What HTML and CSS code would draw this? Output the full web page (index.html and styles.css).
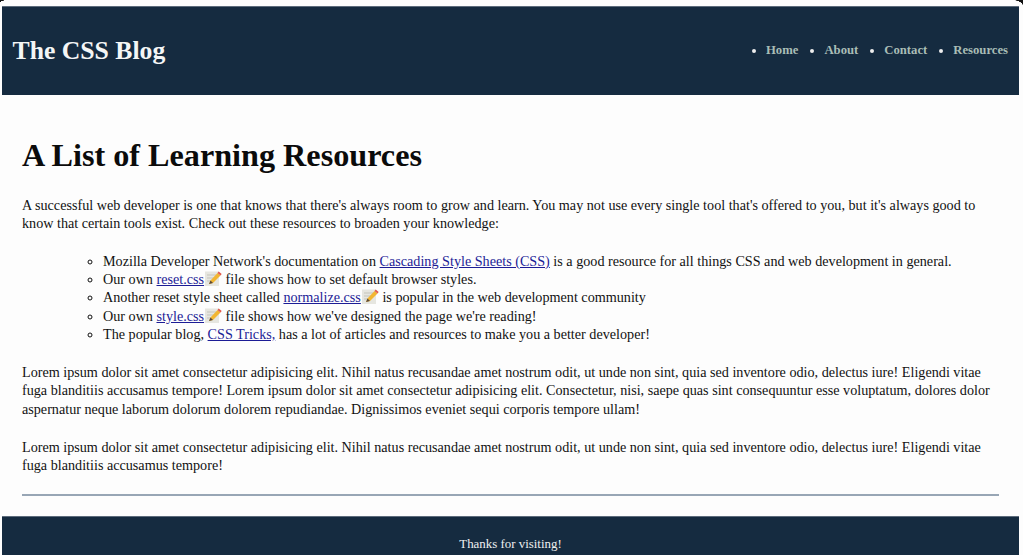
FILE: index.html
```html
<!DOCTYPE html>
<html>
<head>
    <meta charset="UTF-8">
    <title>The CSS Blog</title>
    <link rel="stylesheet" href="styles.css">
</head>
<body>
<span class="corner corner-left"></span>
<span class="corner corner-right"></span>
<header class="top">
    <h2 class="logo">The CSS Blog</h2>
    <ul class="nav">
        <li><a href="#">Home</a></li>
        <li><a href="#">About</a></li>
        <li><a href="#">Contact</a></li>
        <li><a href="#">Resources</a></li>
    </ul>
</header>
<main class="content">
    <h1>A List of Learning Resources</h1>
    <p>A successful web developer is one that knows that there's always room to grow and learn. You may not use every single tool that's offered to you, but it's always good to know that certain tools exist. Check out these resources to broaden your knowledge:</p>
    <ul class="links">
        <li>Mozilla Developer Network's documentation on <a href="#">Cascading Style Sheets (CSS)</a> is a good resource for all things CSS and web development in general.</li>
        <li>Our own <a href="#">reset.css<svg class="memo" viewBox="0 0 18 16"><use href="#memo"/></svg></a> file shows how to set default browser styles.</li>
        <li>Another reset style sheet called <a href="#">normalize.css<svg class="memo" viewBox="0 0 18 16"><use href="#memo"/></svg></a> is popular in the web development community</li>
        <li>Our own <a href="#">style.css<svg class="memo" viewBox="0 0 18 16"><use href="#memo"/></svg></a> file shows how we've designed the page we're reading!</li>
        <li>The popular blog, <a href="#">CSS Tricks,</a> has a lot of articles and resources to make you a better developer!</li>
    </ul>
    <p>Lorem ipsum dolor sit amet consectetur adipisicing elit. Nihil natus recusandae amet nostrum odit, ut unde non sint, quia sed inventore odio, delectus iure! Eligendi vitae fuga blanditiis accusamus tempore! Lorem ipsum dolor sit amet consectetur adipisicing elit. Consectetur, nisi, saepe quas sint consequuntur esse voluptatum, dolores dolor aspernatur neque laborum dolorum dolorem repudiandae. Dignissimos eveniet sequi corporis tempore ullam!</p>
    <p>Lorem ipsum dolor sit amet consectetur adipisicing elit. Nihil natus recusandae amet nostrum odit, ut unde non sint, quia sed inventore odio, delectus iure! Eligendi vitae fuga blanditiis accusamus tempore!</p>
    <hr class="rule">
</main>
<footer class="bottom">Thanks for visiting!</footer>
<svg class="defs" width="0" height="0">
    <symbol id="memo" viewBox="0 0 18 16">
        <rect x="1" y="0.5" width="14" height="14.5" fill="#e6e6e0"/>
        <path d="M3 4h9M3 7h7M3 10h4" stroke="#c4c4bb" stroke-width="1"/>
        <path d="M5 13l1.5-3.5 7-7.5 3 2.5-7.5 7.5z" fill="#f2b632"/>
        <path d="M13.5 2l1.2-1.5 3 2.5-1.2 1.5z" fill="#e2574c"/>
        <path d="M5 13l1.5-3.5 2.5 2.5z" fill="#5a4a3a"/>
    </symbol>
</svg>
</body>
</html>
```

FILE: styles.css
```css
*{margin:0;padding:0;box-sizing:border-box;}
html,body{height:555px;overflow:hidden;}
body{
    position:relative;
    padding:6px 4px 0 2px;
    background:#fdfdfd;
    font-family:"Liberation Serif",serif;
    font-size:14.16px;
    line-height:18.25px;
    color:#111;
}
.defs{position:absolute;}
.corner{position:absolute;top:0;}
.corner-left{
    left:0;
    width:8px;
    height:3px;
    background:radial-gradient(ellipse at bottom right,transparent 68%,#111 72%);
}
.corner-right{
    right:0;
    width:11px;
    height:6px;
    background:radial-gradient(ellipse at bottom left,transparent 68%,#111 72%);
}
.top{
    display:flex;
    justify-content:space-between;
    align-items:center;
    height:89px;
    padding:0 11px 0 10.5px;
    background:#152b40;
    border-top:1px solid #5d6c7c;
}
.logo{
    font-size:25.7px;
    line-height:30px;
    color:#f4f6f6;
}
.nav{
    display:flex;
    gap:14px;
    margin-top:-2px;
    font-size:12.7px;
    font-weight:bold;
    color:#eee;
}
.nav li{margin-left:12px;list-style:disc;}
.nav a{color:#a9bdb6;text-decoration:none;}
.content{padding:41px 20px 0;}
.content h1{
    font-size:32.2px;
    line-height:38px;
    margin-bottom:22px;
    color:#0b0b0b;
}
.content p{margin-bottom:20px;}
.links{
    margin-bottom:20px;
    margin-top:-0.6px;
    padding-left:81px;
    list-style:circle;
}
.links a{color:#1c1c96;}
.memo{
    display:inline-block;
    width:18px;
    height:16px;
    vertical-align:-3px;
}
.rule{
    height:2px;
    margin-top:20px;
    border:none;
    background:#98a6b5;
}
.bottom{
    margin-top:19.6px;
    height:40px;
    padding-top:18px;
    background:#152b40;
    border-top:1px solid #5d6c7c;
    color:#eef0f0;
    text-align:center;
    font-size:12.9px;
}
```
